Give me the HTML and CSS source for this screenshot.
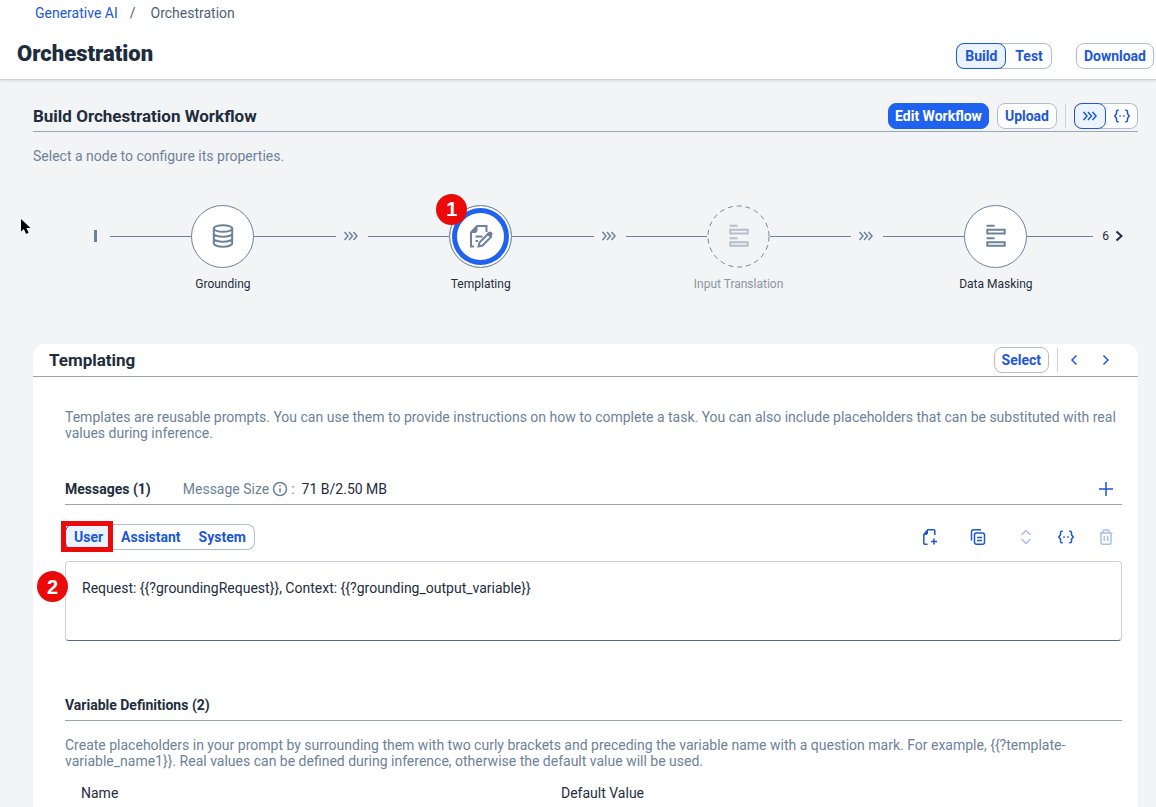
FILE: index.html
```html
<!DOCTYPE html>
<html lang="en">
<head>
<meta charset="utf-8">
<title>Orchestration</title>
<meta name="viewport" content="width=device-width, initial-scale=1">
<link rel="stylesheet" href="styles.css">
</head>
<body>
<svg class="symbols" aria-hidden="true">
  <symbol id="i-flow" viewBox="0 0 16 16"><path d="M1.500 4 5 8l-3.500 4M6 4l3.500 4L6 12M10.500 4 14 8l-3.500 4"/></symbol>
  <symbol id="i-braces" viewBox="0 0 16 16"><path d="M4.800 2.200H4a1.500 1.500 0 0 0-1.500 1.500v2.100L.8 8l1.700 2.200v2.100A1.500 1.500 0 0 0 4 13.800h.8M11.200 2.200h.8a1.500 1.500 0 0 1 1.500 1.500v2.100L15.200 8l-1.700 2.200v2.100a1.500 1.500 0 0 1-1.500 1.500h-.8M5.300 8h1.500M9.200 8h1.500"/></symbol>
  <symbol id="i-rows" viewBox="0 0 24 24"><path d="M2.500 1.800h8M2.500 14.200h8M3.300 5.800h17.400v3.600H3.300zM3.300 18.200h17.400v3.600H3.300z"/></symbol>
</svg>

<header class="shell">
  <nav class="crumbs" aria-label="Breadcrumb">
    <a href="#">Generative AI</a><span class="slash">/</span><span>Orchestration</span>
  </nav>
  <div class="shell-bar">
    <h1>Orchestration</h1>
    <div class="segmented">
      <button class="btn active" type="button">Build</button>
      <button class="btn" type="button">Test</button>
    </div>
    <button class="btn download" type="button">Download</button>
  </div>
</header>

<main>
  <section class="workflow">
    <div class="section-bar">
      <h2>Build Orchestration Workflow</h2>
      <button class="btn primary" type="button">Edit Workflow</button>
      <button class="btn" type="button">Upload</button>
      <span class="divider"></span>
      <div class="segmented icons">
        <button class="btn active" type="button" aria-label="Flow view"><svg class="icon"><use href="#i-flow"/></svg></button>
        <button class="btn" type="button" aria-label="JSON view"><svg class="icon"><use href="#i-braces"/></svg></button>
      </div>
    </div>
    <p class="muted hint">Select a node to configure its properties.</p>

    <div class="flow">
      <span class="flow-start"></span>
      <div class="step">
        <span class="line"></span>
        <button class="node" type="button" aria-labelledby="n1">
          <svg viewBox="0 0 24 24"><ellipse cx="12" cy="4.500" rx="9.200" ry="3.300"/><path d="M2.800 4.500v14.800c0 1.900 4.100 3.400 9.200 3.400s9.200-1.500 9.200-3.400V4.500M2.800 9.400c0 1.900 4.100 3.400 9.200 3.400s9.200-1.500 9.200-3.400M2.800 14.400c0 1.900 4.100 3.400 9.200 3.400s9.200-1.500 9.200-3.400"/></svg>
        </button>
        <span class="line"></span>
        <span class="label" id="n1">Grounding</span>
      </div>
      <svg class="arrow"><use href="#i-flow"/></svg>
      <div class="step">
        <span class="line"></span>
        <button class="node selected" type="button" aria-labelledby="n2">
          <svg viewBox="0 0 24 24"><path d="M5 22.500H2V8.500l6-6.500h9.500v6M6.500 12.500h7M6.500 17h2.500M9.500 22.500l1-4 8.500-8.500 3 3-8.500 8.500z"/><path class="solid" d="M1.500 9 8.500 1.500V7l-2 2zM17.500 10l2-2a2.500 2.500 0 0 1 3.500 3.500l-2 2z"/></svg>
          <span class="badge badge-node">1</span>
        </button>
        <span class="line"></span>
        <span class="label" id="n2">Templating</span>
      </div>
      <svg class="arrow"><use href="#i-flow"/></svg>
      <div class="step disabled">
        <span class="line"></span>
        <button class="node" type="button" disabled aria-labelledby="n3">
          <svg viewBox="0 0 64 64" class="ring"><circle cx="32" cy="32" r="31"/></svg>
          <svg viewBox="0 0 24 24"><use href="#i-rows"/></svg>
        </button>
        <span class="line"></span>
        <span class="label" id="n3">Input Translation</span>
      </div>
      <svg class="arrow"><use href="#i-flow"/></svg>
      <div class="step last">
        <span class="line"></span>
        <button class="node" type="button" aria-labelledby="n4"><svg viewBox="0 0 24 24"><use href="#i-rows"/></svg></button>
        <span class="line"></span>
        <span class="label" id="n4">Data Masking</span>
      </div>
      <button class="more" type="button" aria-label="6 more nodes">6<svg viewBox="0 0 8 12"><path d="m1.500 1.500 5 4.500-5 4.500"/></svg></button>
    </div>
  </section>

  <section class="card">
    <div class="section-bar card-bar">
      <h2>Templating</h2>
      <button class="btn" type="button">Select</button>
      <span class="divider"></span>
      <button class="tool" type="button" aria-label="Previous"><svg class="icon"><path d="M10.500 3.500 6 8l4.500 4.500"/></svg></button>
      <button class="tool" type="button" aria-label="Next"><svg class="icon"><path d="M5.500 3.500 10 8l-4.500 4.500"/></svg></button>
    </div>

    <div class="card-body">
      <p class="muted">Templates are reusable prompts. You can use them to provide instructions on how to complete a task. You can also include placeholders that can be substituted with real values during inference.</p>

      <div class="group-bar messages">
        <h3>Messages (1)</h3>
        <span class="size-label">Message Size
          <svg class="info" viewBox="0 0 16 16"><circle cx="8" cy="8" r="6.500"/><path d="M8 7.200v4.300M8 4.300v1.500"/></svg>
          :</span>
        <span class="size">71 B/2.50 MB</span>
        <button class="tool" type="button" aria-label="Add message"><svg class="icon"><path d="M8 1v14M1 8h14"/></svg></button>
      </div>

      <div class="toolbar">
        <div class="segmented roles">
          <button class="btn active" type="button">User</button>
          <button class="btn" type="button">Assistant</button>
          <button class="btn" type="button">System</button>
          <span class="highlight"></span>
        </div>
        <div class="tools">
          <button class="tool" type="button" aria-label="Add from file"><svg class="icon"><path d="M5.500 15.200H2.800a1 1 0 0 1-1-1V5.500L5.800.8h6a1 1 0 0 1 1 1V6M12 9.500v6M9 12.500h6"/><path class="solid" d="M1.500 5.800 6 1v3.500L4.500 6z"/></svg></button>
          <button class="tool wide" type="button" aria-label="Copy"><svg class="icon"><rect x="4.500" y="4" width="10" height="11.200" rx="2"/><path d="M1.500 11.500V2.800a2 2 0 0 1 2-2H11M7 8.500h5M7 11.500h5"/></svg></button>
          <button class="tool wide" type="button" disabled aria-label="Reorder"><svg class="icon"><path d="m3.500 6 4.500-4.500L12.500 6M3.500 10 8 14.500l4.500-4.500"/></svg></button>
          <button class="tool" type="button" aria-label="Insert placeholder"><svg class="icon"><use href="#i-braces"/></svg></button>
          <button class="tool" type="button" disabled aria-label="Delete"><svg class="icon"><path d="M1.500 4h13M5 3.800V1.900a1 1 0 0 1 1-1h4a1 1 0 0 1 1 1v1.900M3 4.500v9.200a1.500 1.500 0 0 0 1.500 1.500h7a1.500 1.500 0 0 0 1.500-1.500V4.500M6.300 7v5M9.700 7v5"/></svg></button>
        </div>
      </div>

      <div class="prompt">
        <textarea aria-label="User message" spellcheck="false">Request: {{?groundingRequest}}, Context: {{?grounding_output_variable}}</textarea>
        <span class="badge badge-prompt">2</span>
      </div>

      <div class="group-bar variables"><h3>Variable Definitions (2)</h3></div>
      <p class="muted">Create placeholders in your prompt by surrounding them with two curly brackets and preceding the variable name with a question mark. For example, {{?template-variable_name1}}. Real values can be defined during inference, otherwise the default value will be used.</p>
      <table>
        <thead><tr><th scope="col">Name</th><th scope="col">Default Value</th></tr></thead>
      </table>
    </div>
  </section>
</main>

<svg class="cursor" viewBox="0 0 12 18" aria-hidden="true"><path d="M1 1v12.500l2.900-2.600 2.200 5 2.500-1.100-2.200-4.900H10.500z"/></svg>
</body>
</html>
```

FILE: styles.css
```css
:root {
  --blue: #1b57d6;
  --text: #1d2d3e;
  --muted: #6c829b;
  --rule: #98a6b6;
  --border: #b4bcc7;
  --red: #eb0a0a;
}

* { box-sizing: border-box; }

body {
  margin: 0;
  min-height: 100vh;
  display: flex;
  flex-direction: column;
  background: #f3f4f6;
  color: var(--text);
  font: 14px/16px Roboto, "Liberation Sans", sans-serif;
}

h1, h2, h3, p { margin: 0; }

button, textarea { font: inherit; color: inherit; }

.symbols { display: none; }

svg { fill: none; stroke: currentColor; }

.icon { display: block; width: 16px; height: 16px; stroke-width: 1.5; }

.solid { fill: currentColor; stroke: none; }

.muted { color: var(--muted); }

/* Header */
.shell {
  position: relative;
  background: #fff;
  border-bottom: 1px solid #cfd1d4;
  box-shadow: 0 1px 3px #0000001a;
}

.crumbs {
  display: flex;
  padding: 5px 35px 0;
  color: #4f6176;
}

.crumbs a { color: var(--blue); text-decoration: none; }

.slash { padding: 0 15px 0 12px; }

.shell-bar {
  display: flex;
  align-items: center;
  padding: 21px 2px 9px 17px;
}

h1 {
  flex: 1;
  font-size: 22px;
  line-height: 24px;
  font-weight: 900;
  padding-bottom: 4px;
}

.download { margin-left: 24px; }

/* Buttons */
.btn {
  height: 26px;
  padding: 0 7px;
  border: 1px solid var(--border);
  border-radius: 8px;
  background: #fff;
  color: var(--blue);
  font-weight: 700;
}

.btn.primary { background: #2062f0; border-color: #2062f0; color: #fff; padding: 0 6px; }

.segmented {
  position: relative;
  display: flex;
  border-radius: 8px;
  background: #fff;
  box-shadow: inset 0 0 0 1px var(--border);
}

.segmented .btn { background: none; border-color: transparent; padding: 0 8px; }

.segmented .btn.active { background: #eaf3ff; border-color: var(--blue); }

.segmented.icons .btn { padding: 0 7px; }

.segmented.roles .btn { padding: 0 8px; }

.divider { width: 1px; height: 24px; background: #cfd3d9; }

.tool {
  display: grid;
  place-items: center;
  width: 32px;
  height: 26px;
  padding: 0;
  border: 0;
  background: none;
  color: var(--blue);
}

.tool:disabled { color: #a9bfee; }

/* Sections */
main {
  flex: 1;
  display: flex;
  flex-direction: column;
  padding: 23px 18px 0 33px;
}

.section-bar {
  display: flex;
  align-items: center;
  gap: 8px;
  padding-bottom: 2px;
  border-bottom: 1px solid var(--rule);
}

h2 { flex: 1; font-size: 17px; line-height: 20px; font-weight: 700; }

.hint { padding-top: 16px; }

/* Node flow */
.flow {
  display: flex;
  padding: 40px 15px 0 61px;
  height: 180px;
}

.flow-start {
  width: 3px;
  height: 12px;
  margin: 26px 13px 0 0;
  background: var(--muted);
}

.step {
  flex: 163 1 63px;
  display: grid;
  grid-template-columns: 1fr 63px 1fr;
  grid-template-rows: 64px 16px;
  row-gap: 8px;
  align-items: center;
}

.step.last { flex-grow: 147; grid-template-columns: 81fr 63px 66fr; }

.line { height: 1px; background: var(--muted); }

.node {
  position: relative;
  display: grid;
  place-items: center;
  width: 63px;
  height: 63px;
  padding: 0;
  border: 1px solid var(--muted);
  border-radius: 50%;
  background: #fff;
  color: var(--muted);
}

.node svg { width: 24px; height: 24px; stroke-width: 2; }

.node.selected { box-shadow: inset 0 0 0 2px #fff, inset 0 0 0 7px #2062f0; }

.node:disabled { border-color: transparent; background: none; color: #b3bfcc; }

.node .ring {
  position: absolute;
  inset: -1px;
  width: 63px;
  height: 63px;
  stroke: var(--muted);
  stroke-width: 1;
  stroke-dasharray: 5 4;
}

.label {
  grid-column: 2;
  justify-self: center;
  white-space: nowrap;
  font-size: 12px;
}

.disabled .label { color: #8b949f; }

.arrow {
  width: 16px;
  height: 16px;
  margin: 24px 9px 0 7px;
  color: var(--muted);
  stroke-width: 1.5;
}

.more {
  display: flex;
  align-items: center;
  gap: 6px;
  height: 64px;
  margin-left: 9px;
  padding: 0;
  border: 0;
  background: none;
  font-size: 12px;
}

.more svg { width: 8px; height: 12px; stroke-width: 2; }

/* Templating card */
.card {
  flex: 1;
  border-radius: 12px 12px 0 0;
  background: #fff;
}

.card-bar { padding: 3px 16px 3px; }

.card-bar .tool + .tool { margin-left: -8px; }

.card-bar .divider + .tool { margin-left: -8px; }

.card-body { padding: 32px 16px 0 32px; }

.group-bar {
  display: flex;
  align-items: center;
  border-bottom: 1px solid var(--rule);
}

h3 { font-size: 14px; line-height: 16px; font-weight: 700; }

.messages { height: 32px; margin-top: 32px; }

.size-label { display: flex; align-items: center; gap: 3px; margin-left: 32px; color: var(--muted); }

.info { width: 16px; height: 16px; stroke-width: 1.5; }

.size { flex: 1; margin-left: 7px; }

.toolbar {
  display: flex;
  justify-content: space-between;
  margin: 19px 0 11px;
}

.highlight {
  position: absolute;
  left: -4px;
  top: -3px;
  width: 52px;
  height: 31px;
  border: 5px solid var(--red);
  pointer-events: none;
}

.tools { display: flex; gap: 8px; }

.tool.wide { margin-left: 8px; }

.prompt { position: relative; }

textarea {
  display: block;
  width: 100%;
  height: 80px;
  padding: 18px 16px;
  border: 1px solid #ced2d8;
  border-bottom-color: #556b81;
  border-radius: 4px;
  background: #fff;
  resize: none;
  outline: none;
}

.badge {
  position: absolute;
  display: grid;
  place-items: center;
  width: 31px;
  height: 31px;
  border-radius: 50%;
  background: var(--red);
  color: #fff;
  font: 700 20px/24px "Liberation Sans", Arial, sans-serif;
}

.badge-node { left: -14px; top: -12px; }

.badge-prompt { left: -28px; top: 10px; }

.variables { height: 32px; margin: 48px 0 16px; }

table { width: 100%; margin-top: 8px; border-collapse: collapse; table-layout: fixed; }

th { padding: 8px 16px 5px; text-align: left; font-weight: 400; }

th:first-child { width: 480px; }

.cursor {
  position: absolute;
  left: 20px;
  top: 218px;
  width: 12px;
  height: 18px;
  fill: #000;
  stroke: #fff;
  stroke-width: 1;
  paint-order: stroke;
}
```
